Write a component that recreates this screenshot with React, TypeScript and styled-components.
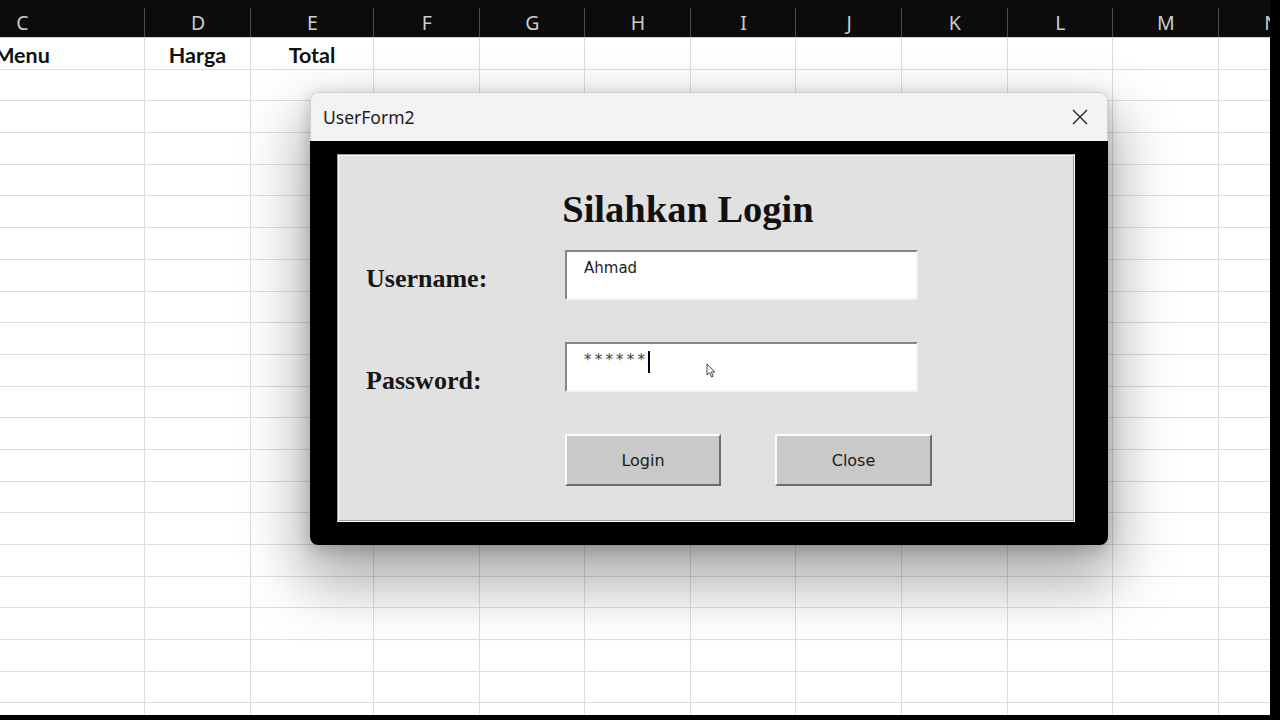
import React from 'react'
import styled, { createGlobalStyle } from 'styled-components'

const GlobalStyle = createGlobalStyle`
  html, body {
    margin: 0;
    padding: 0;
    background: #000;
  }
`

const Screen = styled.div`
  position: relative;
  width: 1280px;
  height: 720px;
  overflow: hidden;
  display: flex;
  flex-direction: column;
  background: #000;
`

const MainRow = styled.div`
  display: flex;
  height: 715px;
`

const Sheet = styled.div`
  width: 1270px;
  overflow: hidden;
  background: #fff;
`

const SheetInner = styled.div`
  margin-left: -100px;
  width: 1425px;
`

const HeaderBar = styled.div`
  display: flex;
  height: 38px;
  background: #0c0c0c;
  border-bottom: 1px solid #cfcfcf;
  box-sizing: border-box;
`

const ColHead = styled.div<{ $w: number }>`
  position: relative;
  flex: 0 0 ${(p) => p.$w}px;
  box-sizing: border-box;
  text-align: center;
  padding-top: 11px;
  font-family: 'Noto Sans', 'Open Sans', sans-serif;
  font-size: 19.5px;
  line-height: 24px;
  color: #cdcdcd;

  &::after {
    content: '';
    position: absolute;
    right: 0;
    top: 8px;
    bottom: 0;
    width: 1px;
    background: #4a4a4a;
  }
`

const Row = styled.div`
  display: flex;
  height: 31.7px;
  box-sizing: border-box;
  border-bottom: 1px solid #dedede;
`

const Cell = styled.div<{ $w: number }>`
  flex: 0 0 ${(p) => p.$w}px;
  box-sizing: border-box;
  border-right: 1px solid #dedede;
  text-align: center;
  padding-top: 2px;
  font-family: Lato, 'Open Sans', sans-serif;
  font-weight: 700;
  font-size: 21.5px;
  line-height: 31px;
  color: #111;
`

const RightEdge = styled.div`
  flex: 1;
  background: #000;
`

const BottomEdge = styled.div`
  height: 5px;
  background: #000;
`

const Dialog = styled.div`
  position: absolute;
  left: 310px;
  top: 92px;
  width: 798px;
  height: 453px;
  display: flex;
  flex-direction: column;
  border-radius: 8px;
  overflow: hidden;
  box-shadow: 0 30px 60px 8px rgba(0, 0, 0, 0.34), 0 4px 16px rgba(0, 0, 0, 0.2);
`

const TitleBar = styled.div`
  height: 49px;
  flex: 0 0 49px;
  box-sizing: border-box;
  display: flex;
  align-items: center;
  justify-content: space-between;
  padding: 0 18px 0 12px;
  background: #f3f3f3;
  border: 1px solid #d0d0d0;
  border-bottom: none;
  border-radius: 8px 8px 0 0;
  font-family: 'Noto Sans', 'Open Sans', sans-serif;
  font-size: 17.5px;
  color: #1c1c1c;
`

const CloseIcon = styled.svg`
  width: 18px;
  height: 18px;
`

const Body = styled.div`
  flex: 1;
  display: flex;
  background: #000;
  padding: 13px 33px 23px 27px;
`

const Panel = styled.div`
  flex: 1;
  display: flex;
  flex-direction: column;
  background: #e1e1e1;
  border: 1px solid;
  border-color: #9c9c9c #fdfdfd #fdfdfd #9c9c9c;
  box-shadow: inset 1px 1px 0 #fdfdfd, inset -1px -1px 0 #9c9c9c;
  padding-top: 32px;
`

const Heading = styled.div`
  text-align: center;
  padding-right: 36px;
  font-family: 'Liberation Serif', 'Times New Roman', serif;
  font-weight: 700;
  font-size: 38.5px;
  line-height: 44px;
  color: #111;
`

const Form = styled.div`
  display: grid;
  grid-template-columns: 199px 353px;
  grid-template-rows: 50px 50px 52px;
  row-gap: 42px;
  padding-left: 28px;
  margin-top: 19px;
`

const Label = styled.div<{ $offset: number }>`
  padding-top: ${(p) => p.$offset}px;
  font-family: 'Liberation Serif', 'Times New Roman', serif;
  font-weight: 700;
  font-size: 26px;
  line-height: 30px;
  color: #161616;
  white-space: nowrap;
`

const TextBox = styled.div`
  position: relative;
  height: 50px;
  box-sizing: border-box;
  background: #fff;
  border: 2px solid;
  border-color: #878787 #f2f2f2 #f2f2f2 #878787;
  padding: 7px 0 0 17px;
  font-family: 'DejaVu Sans', Tahoma, sans-serif;
  font-size: 15px;
  line-height: 18px;
  color: #222;
`

const Masked = styled.span`
  letter-spacing: 3.2px;
  color: #444;
  padding-right: 0;
  border-right: 2px solid #000;
  display: inline-block;
  height: 22px;
`

const Pointer = styled.svg`
  position: absolute;
  left: 139px;
  top: 19px;
  width: 10px;
  height: 15px;
`

const ButtonRow = styled.div`
  grid-column: 2;
  display: flex;
  gap: 54px;
`

const Button = styled.div<{ $w: number }>`
  flex: 0 0 ${(p) => p.$w}px;
  height: 52px;
  box-sizing: border-box;
  display: flex;
  align-items: center;
  justify-content: center;
  background: #c9c9c9;
  border: 2px solid;
  border-color: #fbfbfb #6c6c6c #6c6c6c #fbfbfb;
  font-family: 'DejaVu Sans', Tahoma, sans-serif;
  font-size: 16px;
  color: #1b1b1b;
`

const columns = [
  { key: 'C', w: 245 },
  { key: 'D', w: 106 },
  { key: 'E', w: 123 },
  { key: 'F', w: 105.6 },
  { key: 'G', w: 105.6 },
  { key: 'H', w: 105.6 },
  { key: 'I', w: 105.6 },
  { key: 'J', w: 105.6 },
  { key: 'K', w: 105.6 },
  { key: 'L', w: 105.6 },
  { key: 'M', w: 105.6 },
  { key: 'N', w: 106 },
]

const firstRow: Record<string, string> = { C: 'Menu', D: 'Harga', E: 'Total' }

const App: React.FC = () => {
  const rows = Array.from({ length: 22 }, (_, i) => i)

  return (
    <>
      <GlobalStyle />
      <Screen>
        <MainRow>
          <Sheet>
            <SheetInner>
              <HeaderBar>
                {columns.map((c) => (
                  <ColHead key={c.key} $w={c.w}>
                    {c.key}
                  </ColHead>
                ))}
              </HeaderBar>
              {rows.map((r) => (
                <Row key={r}>
                  {columns.map((c) => (
                    <Cell key={c.key} $w={c.w}>
                      {r === 0 ? firstRow[c.key] : null}
                    </Cell>
                  ))}
                </Row>
              ))}
            </SheetInner>
          </Sheet>
          <RightEdge />
        </MainRow>
        <BottomEdge />

        <Dialog>
          <TitleBar>
            <span>UserForm2</span>
            <CloseIcon viewBox="0 0 18 18">
              <path d="M2 2 L16 16 M16 2 L2 16" stroke="#222" strokeWidth="1.4" fill="none" />
            </CloseIcon>
          </TitleBar>
          <Body>
            <Panel>
              <Heading>Silahkan Login</Heading>
              <Form>
                <Label $offset={14}>Username:</Label>
                <TextBox>Ahmad</TextBox>
                <Label $offset={24}>Password:</Label>
                <TextBox>
                  <Masked>******</Masked>
                  <Pointer viewBox="0 0 10 15">
                    <path
                      d="M1 1 L1 12 L3.6 9.6 L5.6 14 L7.2 13.3 L5.3 9 L8.8 9 Z"
                      fill="#fff"
                      stroke="#333"
                      strokeWidth="0.9"
                      strokeLinejoin="round"
                    />
                  </Pointer>
                </TextBox>
                <ButtonRow>
                  <Button $w={156}>Login</Button>
                  <Button $w={157}>Close</Button>
                </ButtonRow>
              </Form>
            </Panel>
          </Body>
        </Dialog>
      </Screen>
    </>
  )
}

export default App
